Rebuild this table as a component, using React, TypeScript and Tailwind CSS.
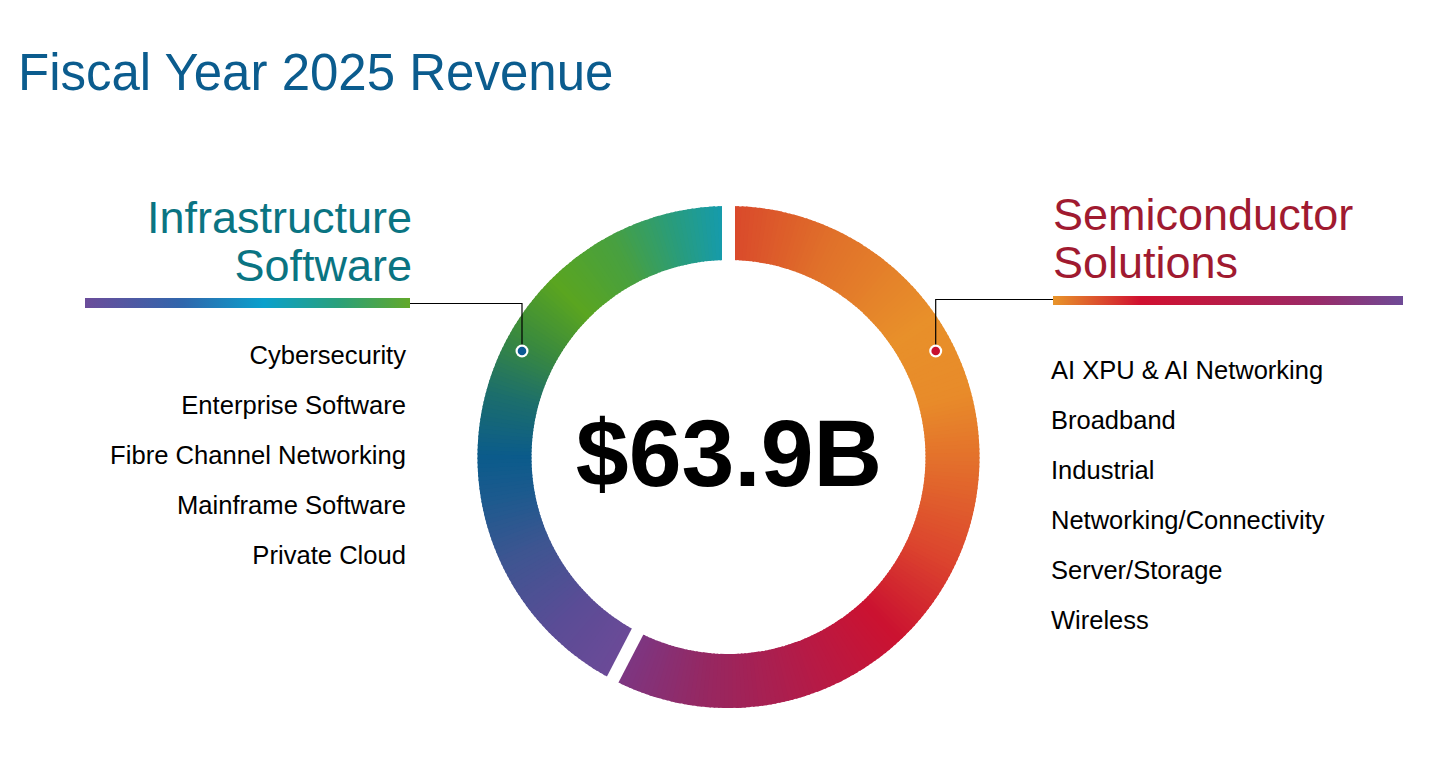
import React from 'react'

type Stop = [number, string]

// angle (deg, clockwise from 12 o'clock) -> colour
const SEMI_STOPS: Stop[] = [
  [0, '#d9472b'],
  [25, '#e0702a'],
  [55, '#e8902a'],
  [75, '#e88b2a'],
  [95, '#e2692c'],
  [115, '#dc452e'],
  [137, '#cb1230'],
  [160, '#b41b47'],
  [185, '#972760'],
  [207.5, '#7b3784'],
]

const SOFT_STOPS: Stop[] = [
  [207.5, '#6c4a97'],
  [225, '#5b4c96'],
  [245, '#3e5591'],
  [260, '#1c5a8e'],
  [270, '#0b5b8b'],
  [285, '#1c6e6c'],
  [300, '#3a8a3e'],
  [315, '#5aa520'],
  [332, '#48a040'],
  [347, '#289c7e'],
  [360, '#139bb2'],
]

const SOFTWARE = ['Cybersecurity', 'Enterprise Software', 'Fibre Channel Networking', 'Mainframe Software', 'Private Cloud']

const SEMIS = [
  'AI XPU & AI Networking',
  'Broadband',
  'Industrial',
  'Networking/Connectivity',
  'Server/Storage',
  'Wireless',
]

const CX = 318.5
const CY = 269
const R_OUT = 251
const R_IN = 197
const SPLIT = 207.5

function hexToRgb(hex: string) {
  const n = parseInt(hex.slice(1), 16)
  return [(n >> 16) & 255, (n >> 8) & 255, n & 255]
}

function colorAt(stops: Stop[], a: number) {
  let i = 0
  while (i < stops.length - 2 && a > stops[i + 1][0]) i++
  const [a0, c0] = stops[i]
  const [a1, c1] = stops[i + 1]
  const t = Math.min(1, Math.max(0, (a - a0) / (a1 - a0)))
  const p = hexToRgb(c0)
  const q = hexToRgb(c1)
  const mix = p.map((v, k) => Math.round(v + (q[k] - v) * t))
  return `rgb(${mix[0]},${mix[1]},${mix[2]})`
}

function pt(r: number, deg: number) {
  const rad = (deg * Math.PI) / 180
  return `${(CX + r * Math.sin(rad)).toFixed(2)} ${(CY - r * Math.cos(rad)).toFixed(2)}`
}

function slice(a0: number, a1: number) {
  return `M${pt(R_OUT, a0)} A${R_OUT} ${R_OUT} 0 0 1 ${pt(R_OUT, a1)} L${pt(R_IN, a1)} A${R_IN} ${R_IN} 0 0 0 ${pt(R_IN, a0)}Z`
}

function Arc({ from, to, stops }: { from: number; to: number; stops: Stop[] }) {
  const step = 1
  const parts: React.ReactNode[] = []
  for (let a = from; a < to; a += step) {
    const b = Math.min(to, a + step)
    parts.push(<path key={a} d={slice(a, Math.min(to, b + 0.4))} fill={colorAt(stops, (a + b) / 2)} />)
  }
  return <g>{parts}</g>
}

function Gap({ angle }: { angle: number }) {
  const rad = (angle * Math.PI) / 180
  const x = (r: number) => CX + r * Math.sin(rad)
  const y = (r: number) => CY - r * Math.cos(rad)
  return <line x1={x(185)} y1={y(185)} x2={x(262)} y2={y(262)} stroke="#fff" strokeWidth={13} />
}

function RevenueRing() {
  return (
    <div className="relative h-[525px] w-[643px] shrink-0">
      <svg width="643" height="525" viewBox="0 0 643 525">
        <Arc from={0} to={SPLIT} stops={SEMI_STOPS} />
        <Arc from={SPLIT} to={360} stops={SOFT_STOPS} />
        <Gap angle={0} />
        <Gap angle={SPLIT} />
        {/* connectors */}
        <path d="M0 115.5 H112 V157" fill="none" stroke="#000" strokeWidth={1.2} />
        <path d="M643 111.5 H525.7 V157" fill="none" stroke="#000" strokeWidth={1.2} />
        <circle cx={112} cy={163} r={6.5} fill="#fff" />
        <circle cx={112} cy={163} r={4.3} fill="#0c5a94" />
        <circle cx={525.7} cy={163} r={6.5} fill="#fff" />
        <circle cx={525.7} cy={163} r={4.3} fill="#c8102e" />
      </svg>
      <div className="absolute left-[119px] top-[69px] flex h-[400px] w-[400px] items-center justify-center pb-[7px]">
        <span className="text-[95px] font-bold leading-none text-black">$63.9B</span>
      </div>
    </div>
  )
}

export default function App() {
  return (
    <div className="h-[762px] w-[1456px] overflow-hidden bg-white font-['Liberation_Sans',Arial,sans-serif]">
      <h1 className="pl-[18px] pt-[47px] text-[51px] leading-none font-normal text-[#0b5c8e]">
        Fiscal Year 2025 Revenue
      </h1>

      <div className="mt-[90px] flex">
        {/* Infrastructure Software */}
        <div className="flex w-[410px] shrink-0 flex-col items-end pt-[6px]">
          <h2 className="-mr-[2px] text-right text-[45px] leading-[48px] text-[#0a7482]">
            Infrastructure
            <br />
            Software
          </h2>
          <div className="mt-[8px] h-[10px] w-[325px] bg-[linear-gradient(90deg,#6b4c9a_0%,#3066ac_30%,#0aa0cc_55%,#2aa07a_78%,#62a82a_100%)]" />
          <ul className="mt-[22px] pr-[4px] text-right text-[25.6px] leading-[50px] text-black">
            {SOFTWARE.map((item) => (
              <li key={item}>{item}</li>
            ))}
          </ul>
        </div>

        <RevenueRing />

        {/* Semiconductor Solutions */}
        <div className="flex flex-1 flex-col items-start pt-[3px]">
          <h2 className="text-[45px] leading-[48px] text-[#a01a30]">
            Semiconductor
            <br />
            Solutions
          </h2>
          <div className="mt-[9px] h-[9px] w-[350px] bg-[linear-gradient(90deg,#e8952a_0%,#d01030_25%,#b81c48_50%,#9a2a68_75%,#6e4a96_100%)]" />
          <ul className="-ml-[2px] mt-[40px] text-[25.5px] leading-[50px] text-black">
            {SEMIS.map((item) => (
              <li key={item}>{item}</li>
            ))}
          </ul>
        </div>
      </div>
    </div>
  )
}
